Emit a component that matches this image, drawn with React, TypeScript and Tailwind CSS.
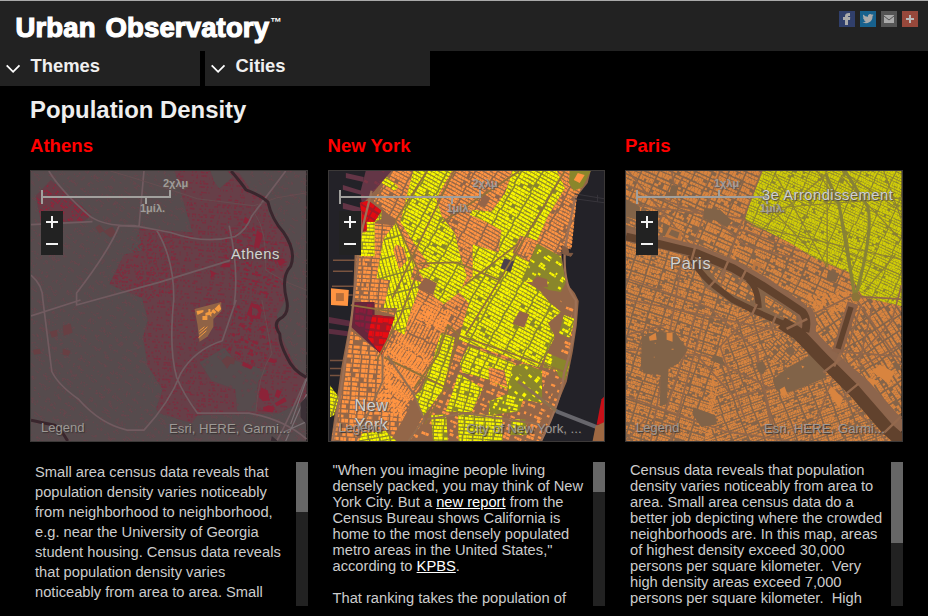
import React from "react";

type Grid = { x: number; y: number; w: number; h: number; angle: number; bw: number; bh: number; road: number; keep: number; cell: number; seed: number };

function random(seed: number) {
  let s = seed >>> 0;
  return () => {
    s = (s * 1664525 + 1013904223) >>> 0;
    return s / 4294967296;
  };
}

// Building footprints laid out in city blocks, as one path.
function buildings(g: Grid) {
  const rnd = random(g.seed);
  const rad = (g.angle * Math.PI) / 180;
  const c = Math.cos(rad);
  const s = Math.sin(rad);
  const cx = g.x + g.w / 2;
  const cy = g.y + g.h / 2;
  const r = Math.hypot(g.w, g.h) / 2;
  let d = "";
  for (let v = -r; v < r; v += g.bh + g.road) {
    const shift = rnd() * 2;
    for (let u = -r; u < r; u += g.bw + g.road) {
      const rows = Math.max(1, Math.round(g.bh / g.cell));
      const ch = g.bh / rows;
      for (let row = 0; row < rows; row++) {
        let p = 0;
        while (p < g.bw) {
          const len = Math.min(g.bw - p, g.cell * (0.7 + rnd()));
          const keep = rnd() < g.keep;
          const hh = ch * (0.7 + rnd() * 0.28);
          if (keep) {
            const a = u + p + shift;
            const b = v + row * ch + (row % 2 ? ch - hh : 0);
            const l = len - 0.35;
            const X = cx + a * c - b * s;
            const Y = cy + a * s + b * c;
            if (X > g.x - 6 && X < g.x + g.w + 6 && Y > g.y - 6 && Y < g.y + g.h + 6) {
              d += `M${X.toFixed(1)} ${Y.toFixed(1)}l${(l * c).toFixed(1)} ${(l * s).toFixed(1)}l${(-hh * s).toFixed(1)} ${(hh * c).toFixed(1)}l${(-l * c).toFixed(1)} ${(-l * s).toFixed(1)}z`;
            }
          }
          p += len;
        }
      }
    }
  }
  return d;
}

function bounds(points: string) {
  const n = points.trim().split(/[\s,]+/).map(Number);
  const xs = n.filter((_, i) => i % 2 === 0);
  const ys = n.filter((_, i) => i % 2 === 1);
  const x = Math.min(...xs);
  const y = Math.min(...ys);
  return { x, y, w: Math.max(...xs) - x, h: Math.max(...ys) - y };
}

type ZoneProps = { id: string; pts: string; ground?: string; fill: string; angle: number; bw?: number; bh?: number; road?: number; keep?: number; cell?: number; seed?: number };

function Zone({ id, pts, ground, fill, angle, bw = 17, bh = 5.8, road = 1.3, keep = 0.95, cell = 2.9, seed = 7 }: ZoneProps) {
  return (
    <g>
      <clipPath id={id}><polygon points={pts} /></clipPath>
      {ground && <polygon points={pts} fill={ground} />}
      <path clipPath={`url(#${id})`} fill={fill} d={buildings({ ...bounds(pts), angle, bw, bh, road, keep, cell, seed })} />
    </g>
  );
}

function Lines({ d, color, width }: { d: string; color: string; width: number }) {
  return <path d={d} fill="none" stroke={color} strokeWidth={width} strokeLinejoin="round" />;
}

function AthensMap() {
  const east = "175,170 228,170 240,172 252,190 268,196 270,214 293,243 294,254 287,270 287,300 278,315 282,335 297,368 308,378 308,400 280,414 198,416 192,424 160,414 156,410 163,390 148,367 143,338 148,320 142,298 109,284 124,254 142,250 139,228 155,229 193,232";
  return (
    <svg className="block h-full w-full" viewBox="30 170 278 272" preserveAspectRatio="none">
      <rect x="30" y="170" width="278" height="272" fill="#564b4d" />
      <Zone id="aBase" pts="30,170 308,170 308,442 30,442" fill="#69454c" angle={38} bw={13} bh={5} road={4} keep={0.35} cell={1.4} seed={3} />
      <polygon points={east} fill="#673f48" />
      <Zone id="aEast" pts={east} fill="#7e2c3e" angle={4} bw={10} bh={3.6} road={2} keep={0.4} cell={1.5} seed={11} />
      <Zone id="aWest" pts="50,179 91,214 83,221 40,221 35,195" ground="#673c46" fill="#94233a" angle={40} bw={9} bh={4} road={2.2} keep={0.55} cell={1.7} seed={21} />
      <Zone id="aMid" pts="112,284 141,228 175,232 175,292 148,300" fill="#8a263b" angle={-40} bw={9} bh={3} road={2} keep={0.35} cell={1.4} seed={22} />
      <Zone id="aCentre" pts="226,225 262,226 280,245 281,285 266,300 236,285 226,260" fill="#8d2239" angle={14} bw={9} bh={6} road={3} keep={0.35} cell={2.4} seed={28} />
      <Zone id="aCampus" pts="237,300 264,300 274,345 268,371 245,366 227,352" fill="#8a2439" angle={28} bw={9} bh={6} road={3} keep={0.35} cell={2.7} seed={58} />
      <polygon points="200,363 225,348 236,361 268,371 259,382 257,412 238,412 236,390 212,381" fill="#564b4d" />
      <polygon points="211,170 228,170 234,176 220,188 215,181" fill="#564c4d" />
      <Zone id="aSouth" pts="200,363 225,348 236,361 268,371 259,382 257,412 238,412 236,390 212,381" fill="#65434a" angle={35} keep={0.2} cell={2.4} seed={8} />
      <g fill="#683f43">
        <path d="M103 231l9-5 5 8-7 3z" /><path d="m95 227 4-3 5 6-5 3zM62 326l8-2 2 9-9 3zm-13 6 7-2 1 6-6 2zm13 17 8 2-2 5-6-1zM32 350l7-1 1 5-7 1zM222 361l5-4 5 6-4 6zm5-5 9 3-1 6-8-2z" />
      </g>
      <g fill="#8c2338">
        <path fillRule="evenodd" d="m252 303 8 2 3 5-2 8-8 1-5-5zM253 307l5 2 2 4-3 3-4-1z" />
        <path d="m262 388 7 3 2 10-7 1-4-4zm16 2 5 2-3 7-4-2zm-14 18 6-2 6 2-2 5-9-1zM276 404l10-6 2 4-10 5zM270 358l8 3-2 3-7-2zM244 362l10 5-2 3-9-4zM258 230l6 3-4 15-5-2zm20 30 6-2 3 4-6 4zM211 270l6 3-5 5zM246 216l6 4-3 4-5-2zM223 263h8v4h-9z" />
      </g>
      <Lines d="M48 170Q60 190 90 216Q105 226 134 225L171 232Q205 244 236 236Q247 230 253 215L287 170M144 170L139 226L119 225Q109 250 76 293V305L160 282L231 260M30 224L92 221M30 316L80 300M30 275Q42 285 42 300L51 372Q57 385 78 400Q100 425 127 431H144Q170 403 181 374Q195 350 223 341L237 300M174 300Q169 350 177 378Q184 395 198 414H250Q285 420 308 440M174 302Q175 260 157 230M230 225Q240 270 235 305M308 378Q290 420 278 442" color="#715b60" width={1.7} />
      <Lines d="M110 170Q145 180 198 198L255 205L278 197L308 192M273 354Q259 375 257 413M263 300Q268 325 273 354M256 213Q268 230 267 270L288 282L308 290" color="#674d51" width={0.9} />
      <Lines d="M232 170Q243 183 247 189Q261 194 269 201Q273 219 285 232Q298 251 292 266Q282 277 288 300Q291 314 281 319Q274 324 281 334Q281 344 288 357Q294 371 308 378M30 421Q39 423 54 426Q61 431 67 442" color="#39262d" width={3} />
      <polygon points="195,309 222,302 222,311 214,319 214,327 208,337 200,342 198,325" fill="#906346" />
      <path d="m197 311 7-1v2l-6 3zm9 2 3-1v-3h2v3l4-1-3 3v3l-2-2-4 1zm14-9 2 5-3 3-4-3zm-6 5 3 3-2 2-3-3zm-11 7h5v4h-5z" fill="#f39b40" />
      <path d="m199 338 8-7m-7 3 8-7m-8 4 5-4" fill="none" stroke="#f39b40" strokeWidth="1" />
      <Lines d="M292 425L308 380M287 442L308 395M285 433L307 423" color="#7a7074" width={1.2} />
      <path d="M273 437l6 5h-7zM302 404l6-7v28l-6-7z" fill="#3b3036" />
    </svg>
  );
}

const NY_YELLOW: { p: string; a: number }[] = [
  { p: "383,173 398,186 394,190 378,180", a: 29 },
  { p: "413,170 452,170 436,198 442,216 455,233 460,254 467,276 460,292 444,304 436,298 418,270 430,266 412,240 400,221", a: 29 },
  { p: "396,222 405,240 415,264 410,279 421,282 408,318 404,335 391,328 397,308 383,308 390,280 376,278 383,238", a: 75 },
  { p: "357,232 365,232 365,222 381,209 381,218 374,222 374,256 357,256", a: 2 },
  { p: "513,170 558,170 566,187 549,215 538,240 521,235 513,252 530,262 524,280 540,290 550,302 562,312 549,323 556,337 540,368 496,353 459,340 469,303 459,292 473,276 473,244 499,252 502,230 484,220 470,214 473,209 492,211 506,192", a: 29 },
  { p: "469,346 513,363 526,374 508,390 489,380 463,373 460,364", a: 22 },
  { p: "441,333 455,338 448,370 443,390 430,408 423,418 414,397 421,391 433,360", a: 20 },
  { p: "459,374 483,389 472,413 446,412", a: 15 },
  { p: "431,416 446,415 448,442 433,442", a: 2 },
  { p: "458,413 503,417 503,442 459,442", a: 4 },
  { p: "362,434 385,432 396,442 358,442", a: -10 },
];

function NewYorkMap() {
  const olive = "#8a862b";
  const yellow = "#f9f700";
  const orange = "#ff9442";
  const land = "372,170 592,170 589,182 578,196 575,225 572,249 562,244 563,257 567,282 576,293 580,301 578,326 574,352 568,382 556,411 542,442 330,442 340,370 352,306 354,250 361,204";
  return (
    <svg className="block h-full w-full" viewBox="328 170 278 272" preserveAspectRatio="none">
      <rect x="328" y="170" width="278" height="272" fill="#232228" />
      <path d="M345 172l18 4v5l-18-4zm-3 12 22 7v4l-22-6zm0 18 18 5v5l-18-4z" fill="#633546" />
      <path d="M332 260h22M332 271h20M331 286h22M331 295h21M329 361h13M329 369h11M329 376h10" stroke="#79533f" strokeWidth="1.5" />
      <polygon points="330,288 348,290 347,306 330,305" fill="#ff9442" />
      <rect x="335" y="293" width="8" height="8" fill="#b66e3b" />
      <path d="M328 317l23 4v6l-23-4zm0 12 23 3v5l-23-3z" fill="#5b2d40" />
      <polygon points={land} fill="#936648" />
      <Zone id="nNorth" pts="392,170 590,170 578,197 573,247 540,260 525,285 500,300 450,335 400,316 395,220 373,200" fill={orange} angle={29} seed={19} />
      <Zone id="nWest" pts="366,222 394,225 386,305 397,316 376,310 354,298 356,258" fill={orange} angle={3} bw={8} bh={7} keep={0.95} seed={31} />
      <Zone id="nVillage" pts="395,316 420,300 452,312 438,350 412,392 400,418 375,350 390,330" fill={orange} angle={117} bw={15} bh={5} seed={17} />
      <Zone id="nSoho" pts="349,330 382,355 404,418 390,442 330,442 344,380" fill={orange} angle={4} bw={7} bh={8} cell={3.6} keep={0.9} seed={14} />
      <Zone id="nHudson" pts="382,355 400,335 433,361 418,390 403,420 374,410" fill={orange} angle={-50} bw={14} bh={5} keep={0.97} seed={41} />
      <Zone id="nEast" pts="450,337 484,345 555,365 573,325 561,300 576,310 572,350 560,395 543,442 410,442 440,382" fill={orange} angle={22} bw={8} bh={6} road={3} keep={0.58} cell={3} seed={12} />
      {NY_YELLOW.map((z, i) => (
        <Zone key={i} id={`ny${i}`} pts={z.p} ground={olive} fill={yellow} angle={z.a} bw={i > 4 ? 9 : 17} bh={6} seed={i * 17 + 5} keep={0.97} />
      ))}
      <Zone id="nOlive1" pts="538,243 562,256 567,282 562,292 550,290 535,282 522,281" ground={olive} fill={yellow} angle={34} bw={8} bh={5} road={5} keep={0.5} seed={4} />
      <Zone id="nOlive2" pts="513,367 525,364 543,371 543,404 508,397" ground={olive} fill={yellow} angle={-50} bw={7} bh={4} road={4} keep={0.65} seed={9} />
      <Zone id="nOlive3" pts="565,315 576,319 571,338 560,334" ground={olive} fill={yellow} angle={29} keep={0.5} seed={2} />
      <Zone id="nOlive4" pts="548,353 571,363 566,381 556,370 544,368" ground={olive} fill={yellow} angle={25} keep={0.45} seed={6} />
      <Zone id="nOlive5" pts="507,395 524,400 520,412 489,416 490,402" ground={olive} fill={yellow} angle={15} keep={0.55} seed={16} />
      <Zone id="nOlive6" pts="512,420 526,420 528,436 511,436" ground={olive} fill={yellow} angle={6} keep={0.6} seed={13} />
      <Zone id="nOlive7" pts="329,386 338,398 333,416 329,418" ground={olive} fill={yellow} angle={15} seed={16} />
      <polygon points="556,358 571,362 566,381 559,376" fill={olive} />
      <polygon points="571,170 592,170 584,186 575,190 570,182" fill={olive} />
      <path d="M579 172l7 2-5 8-6-3z" fill={orange} />
      <path d="m425 277 12 6-4 12-16-7zM484 193l7 4-6 10-6-3zM520 311l10 3-5 14-12-4zM538 276l10 3 1 8-12-1-4-5z" fill="#956448" />
      <Zone id="nJackson" pts="396,244 403,247 407,260 399,269 393,250" ground="#936648" fill={orange} angle={75} seed={51} />
      <Zone id="nPocket" pts="518,242 533,241 527,260 516,252" ground="#936648" fill={orange} angle={117} seed={23} />
      <Zone id="nPocket2" pts="489,368 505,371 508,388 490,381" ground="#956448" fill={orange} angle={22} seed={26} />
      <polygon points="505,258 515,261 511,272 501,268" fill="#4b414b" />
      <polygon points="365,170 391,170 372,192 361,204 360,190" fill="#633646" />
      <Zone id="nMauve" pts="365,170 391,170 372,192 361,204 360,190" fill="#7a3545" angle={30} keep={0.25} seed={44} />
      <Zone id="nRed1" pts="359,202 368,200 381,210 374,221 366,221 366,231 361,231 361,213" ground="#a51925" fill="#e20b12" angle={30} cell={5} seed={31} />
      <polygon points="353,302 374,302 374,315 394,317 381,355 349,326" fill="#66273b" />
      <Zone id="nRed2" pts="355,304 372,304 372,320 368,334 354,324" fill="#891c3c" angle={8} cell={4.5} seed={31} />
      <Zone id="nRed3" pts="372,315 394,317 381,355 367,338" ground="#a51925" fill="#e90c12" angle={5} cell={4} seed={3} />
      <Lines d="M395 220L418 270L400 316L376 361M395 220L427 170M454 170L392 298M384 358L450 390M350 305L394 312M414 389L438 355L448 325L460 336L565 372M459 335L443 392L425 425M466 335L500 280L566 170M442 222L520 170M500 280L457 262L419 263M465 285L519 243" color="#91713a" width={1.8} />
      <Lines d="M371 190L360 235L350 325L332 442M577 195Q568 235 566 250Q564 285 577 300Q578 335 565 374Q563 400 542 442" color="#9d7055" width={2.3} />
      <Lines d="M382 354V382L355 442M387 356L413 394L424 420L408 442M427 420L465 414L540 425" color="#936e50" width={2} />
      <Lines d="M519 382L558 412" color="#8b704f" width={3} />
      <Lines d="M557 412L606 431" color="#67666c" width={4} />
      <path d="M563 245l6 3 1 5 4 0-2 3-8-3zM561 252l8 3" fill="#805a43" stroke="#805a43" strokeWidth="1" />
      <path d="M576 193l30 5M576 198l30 4M599 194v7" stroke="#38363c" fill="none" />
      <path d="M603 400l3-3v27l-8 2z" fill="#c81018" />
      <path d="M597 427l9-4v19H594z" fill="#9e6842" />
    </svg>
  );
}

function ParisMap() {
  const marais = "762,170 903,170 903,306 864,297 850,272 816,258 790,242 745,219 752,196";
  const earth = "#856449";
  const orange = "#d8843f";
  return (
    <svg className="block h-full w-full" viewBox="625 170 278 272" preserveAspectRatio="none">
      <rect x="625" y="170" width="278" height="272" fill={earth} />
      <Zone id="pNorthWest" pts="625,170 762,170 745,219 733,263 688,248 625,224" fill={orange} angle={24} bw={15} bh={9} road={1.2} keep={0.9} cell={2.6} seed={7} />
      <Zone id="pNorth" pts="745,219 852,271 865,310 805,312 755,281 729,264" fill={orange} angle={25} bw={17} bh={8} road={1.2} keep={0.9} cell={2.6} seed={17} />
      <Zone id="pWest" pts="625,238 690,257 705,287 740,308 720,360 711,442 625,442" fill={orange} angle={18} bw={14} bh={10} road={1.3} keep={0.88} cell={2.2} seed={67} />
      <Zone id="pSouth" pts="740,306 790,330 840,380 896,442 704,442 714,360" fill={orange} angle={-20} bw={14} bh={8} road={1.3} keep={0.88} cell={2.2} seed={27} />
      <Zone id="pIsland" pts="702,261 735,275 752,286 758,305 725,291" fill={orange} angle={28} bw={10} bh={7} keep={0.85} cell={3} seed={61} />
      <Zone id="pEast" pts="807,295 870,290 903,307 903,430 862,391 808,328" fill={orange} angle={57} bw={13} bh={9} road={1.3} keep={0.9} cell={2.6} seed={97} />
      <Zone id="pMarais" pts={marais} ground="#8b8430" fill="#d1cd08" angle={25} bw={15} bh={9} road={0.8} keep={0.96} cell={2.5} seed={37} />
      <Lines d="M627 170L691 246M671 170L678 206L746 219M762 170L733 245L718 294M720 170L691 249L676 275M625 203L710 214L744 244L805 261M625 184L800 251M683 175L650 237M625 299L790 333M700 300L682 360L665 412M625 397L724 432L790 442M680 270L650 442M625 350L705 356L773 390M705 313L670 442M757 350L773 437M725 345L790 320M755 310L720 347L745 420M735 397L835 375L810 442M625 278L708 307L755 349L777 442M644 420L625 442M695 354L735 399M665 325L626 335M806 318L852 296L903 299M862 305L840 376M858 300L903 365M841 352L903 357M838 378L893 322L903 285M855 371L903 344M837 390L888 442M874 305L860 365" color="#92674a" width={1.7} />
      <g fill="#816348">
        <path d="m641 337 14-5 20 1 12 17-9 14-10 5-2 36-7 2 1-32-17-1-3-8zM773 380l17-13 22-12 13 8 2 15-24 10-20 7-7-5zM693 408l22 8 2 9-16 3-9-13z" />
        <path d="M704 207l16 2 12 11-5 7-13-8-11 0zM671 184l7 1-3 11-7-1zM662 223l19 7-4 12-15-7zM625 199l14 7v14l-14-4zM829 270l11 3-3 9-10-2zM758 364l5-3 4 8-4 6-5-3zM714 355l8 3 3 8-15-5z" />
      </g>
      <g fill={orange}>
        <path d="m648 337 7-4 1 7-7 1zm18-4h6v9l-6-2zM653 357h1v1h-1zm18-8h2v1h-2zm-17-6h1v1h-1zm134 35 2 1-2 1zm14-12 3 1-2 2zm-22 24 5-3 3 8-6 2z" />
      </g>
      <path fillRule="evenodd" d="m669 226 13 5-3 11-15-6zm2 3-3 5 9 4 2-6zM754 261l8 3-4 11-7-3zm2 4-1 4 2 1 2-4z" fill="#bd763f" />
      <path d="m881 365 15 8-6 11-17-12zM870 378l8 3-4 7-7-4zm-38 9 12 12-4 10-11-17z" fill={orange} />
      <Zone id="pPlants" pts="765,344 781,333 806,352 785,368 773,359" ground={earth} fill={orange} angle={42} bw={6} bh={5} road={1.2} keep={0.96} cell={2.8} seed={91} />
      <g fill={earth}><circle cx="775" cy="352" r="2.5" /><circle cx="791" cy="351" r="4" /><circle cx="784" cy="362" r="2" /></g>
      <Lines d="M818 170L840 204L848 238L856 295M843 170L903 211M842 175L903 240M777 207L903 197M757 192L810 249M764 227L828 172M828 172V267M751 225L903 259M775 172L828 267M885 170L903 219M865 292L897 254M844 250L903 275" color="#8d8132" width={1.2} />
      <Lines d="M827 174L840 204L856 297M846 170L869 206Q875 232 856 298" color="#888236" width={3.2} />
      <Lines d="M625 234L660 242L697 251L733 266L764 283L790 301L804 311" color="#8d654c" width={13} />
      <Lines d="M804 311Q811 320 807 334L822 350L844 371L864 388L903 432" color="#8d654c" width={17} />
      <Lines d="M625 236L660 244L697 253L733 268L762 285L788 302L803 312Q809 319 806 332" color="#61422d" width={8} />
      <Lines d="M690 255Q697 271 712 284L733 300L755 311L782 323L800 336" color="#61422d" width={6} />
      <Lines d="M748 279Q758 287 759 308" color="#61422d" width={6} />
      <polygon points="763,294 785,307 798,316 799,324 780,317 765,308" fill={earth} />
      <Zone id="pIsland2" pts="765,295 784,307 797,316 797,323 780,316 766,307" fill={orange} angle={30} bw={10} bh={7} keep={0.9} cell={2.6} seed={62} />
      <Lines d="M782 323L799 334L823 359L856 392L888 429L903 442" color="#61422d" width={13} />
      <Lines d="M854 303L838 353" color="#8c6249" width={11} />
      <Lines d="M852 307L839 349" color="#61422d" width={5.5} />
      <Lines d="M695 246l-4 14M728 261l-7 16M746 270l-7 14M757 304l-5 11M777 314l-5 12M808 319l-21 10M842 359l-18 14M860 384l-15 12M903 417l-19 18M842 353l-7 14M716 279l-9 10" color="#94694d" width={2.4} />
      <circle cx="857" cy="297" r="4.5" fill="#8b7338" />
    </svg>
  );
}

const SCALES: Record<string, { bar: string; km: string; mile: string }> = {
  Athens: { bar: "M1 2v14M0 9h130M129 2v7M105 9v7", km: "left-[122px]", mile: "left-[99px]" },
  "New York": { bar: "M1 2v14M0 9h142M141 2v7M113 9v7", km: "left-[134px]", mile: "left-[108px]" },
  Paris: { bar: "M1 2v14M0 9h132M131 9v7M83 2v7", km: "left-[78px]", mile: "left-[124px]" },
};

function ScaleBar({ unit, place }: { unit: string; place: string }) {
  const scale = SCALES[place];
  return (
    <div className="absolute left-[10px] top-[5px] h-[39px] w-[165px] text-[11px] font-bold leading-[13px] text-[#9f9c99] [text-shadow:1px_1px_1px_#62544f]">
      <svg className="absolute left-0 top-3" width="146" height="24" viewBox="0 0 146 24" fill="none" stroke="#a1a09d" strokeWidth="2">
        <path d={scale.bar} />
      </svg>
      <span className={`absolute top-[1px] ${scale.km}`}>{unit}</span>
      <span className={`absolute top-[26px] ${scale.mile}`}>1μίλ.</span>
    </div>
  );
}

function MapPanel({ city, unit, credit, children, label }: { city: string; unit: string; credit: string; children: React.ReactNode; label: React.ReactNode }) {
  return (
    <div className="relative h-[272px] overflow-hidden border border-[#3c3938]">
      {children}
      <ScaleBar unit={unit} place={city} />
      <div className="absolute left-[10px] top-[40px] flex h-11 w-[22px] flex-col bg-[#222]">
        <svg viewBox="0 0 22 44" className="h-11 w-[22px]" stroke="#f2f2f2" strokeWidth="2"><path d="M5 11h12M11 5v12M5 33h12" /></svg>
      </div>
      {label}
      <span className="absolute bottom-[5px] left-[10px] text-[13px] leading-4 text-[#9d9995] [text-shadow:1px_1px_1px_#383333]">Legend</span>
      <span className="absolute bottom-[4px] left-[138px] whitespace-nowrap text-[13.2px] leading-4 text-[#9d9995] [text-shadow:1px_1px_1px_#383333]">{credit}</span>
    </div>
  );
}

const labelStyle = "absolute whitespace-nowrap text-[#d3d3d0] [text-shadow:1px_1px_1px_#4c4643,0_0_1px_#57504b]";

function Story({ lines, thumb, loose = false }: { lines: React.ReactNode[]; thumb: string; loose?: boolean }) {
  return (
    <div className="mt-5 flex h-36 justify-between overflow-hidden">
      <div className={`whitespace-pre pl-[5px] text-[14.7px] text-[#ccc] ${loose ? "leading-5" : "leading-4"}`}>
        {lines.map((line, i) => <div key={i} className={loose ? "h-5" : "h-4"}>{line}</div>)}
      </div>
      <div className="h-full w-3 shrink-0 bg-[#222]"><div className={`${thumb} w-3 bg-[#666]`} /></div>
    </div>
  );
}

function City({ name, children }: { name: string; children: React.ReactNode }) {
  return (
    <section className="w-[277.5px] shrink-0">
      <h2 className="h-[35px] text-[18.6px] font-bold leading-[22px] text-[#f00]">{name}</h2>
      {children}
    </section>
  );
}

function Tab({ label, width }: { label: string; width: string }) {
  return (
    <button className={`flex h-[35px] ${width} items-start bg-[#222] pl-[6px] pt-[3px]`}>
      <svg className="mt-[10px]" width="15" height="10" viewBox="0 0 15 10" fill="none" stroke="white" strokeWidth="1.8"><path d="m.7 1.3 6.4 6.5 6.4-6.5" /></svg>
      <span className="ml-[9.5px] text-[18.4px] font-bold leading-[24px] text-[#f0f0f0]">{label}</span>
    </button>
  );
}

function Share() {
  return (
    <div className="ml-auto mr-[10px] mt-[10px] flex gap-[5px]">
      <svg width="16" height="16"><path fill="#303f6b" d="M0 0h16v16H0z" /><path fill="#aaa" d="M6 14V9H4V6h2V5q0-3 4-3h1v3H9.5Q9 5 9 6h2.2L11 9H9v5z" /></svg>
      <svg width="16" height="16"><path fill="#17618d" d="M0 0h16v16H0z" /><path transform="translate(2.4 1.9) scale(.47)" fill="#aaa" d="M24 4.6a10 10 0 0 1-2.8.8 5 5 0 0 0 2.2-2.7 10 10 0 0 1-3.1 1.2 4.9 4.9 0 0 0-8.4 4.5A14 14 0 0 1 1.7 3.2a4.9 4.9 0 0 0 1.5 6.5A5 5 0 0 1 1 9.1c0 2.3 1.6 4.4 3.9 4.9a5 5 0 0 1-2.2.1 5 5 0 0 0 4.6 3.4A10 10 0 0 1 0 19.5 14 14 0 0 0 21.5 7z" /></svg>
      <svg width="16" height="16"><path fill="#555" d="M0 0h16v16H0z" /><path d="M3 4h10v8H3z" fill="#aaa" /><path d="m3 5 5 4 5-4" stroke="#555" fill="none" /></svg>
      <svg width="16" height="16"><path fill="#97483b" d="M0 0h16v16H0z" /><path d="M4 8h8M8 4v8" stroke="#bbb" strokeWidth="2" /></svg>
    </div>
  );
}

export default function App() {
  return (
    <main className="h-[616px] w-[928px] overflow-hidden bg-black font-['Liberation_Sans',Arial,sans-serif]">
      <header className="flex h-[51px] border-t border-[#aaa] bg-[#222] pl-[15.5px]">
        <h1 className="mt-[9px] whitespace-nowrap text-[27.5px] font-bold leading-[36px] tracking-[0.15px] text-white [-webkit-text-stroke:1.2px_white] [word-spacing:2px]">Urban Observatory</h1>
        <span className="ml-[1px] mt-[15px] text-[11.5px] font-bold leading-3 text-white">™</span>
        <Share />
      </header>
      <nav className="flex gap-[5px]"><Tab label="Themes" width="w-[200px]" /><Tab label="Cities" width="w-[225px]" /></nav>
      <h1 className="h-[49px] pl-[30px] pt-[10px] text-[23.9px] font-bold leading-[28px] text-[#eee]">Population Density</h1>
      <div className="flex gap-5 pl-[30px]">
        <City name="Athens">
          <MapPanel city="Athens" unit="2χλμ" credit="Esri, HERE, Garmi..." label={<span className={`${labelStyle} left-[200px] top-[72px] text-[14.7px] tracking-[.5px]`}>Athens</span>}><AthensMap /></MapPanel>
          <Story loose thumb="h-[50px]" lines={["Small area census data reveals that", "population density varies noticeably", "from neighborhood to neighborhood,", "e.g. near the University of Georgia", "student housing. Census data reveals", "that population density varies", "noticeably from area to area. Small"]} />
        </City>
        <City name="New York">
          <MapPanel city="New York" unit="2χλμ" credit="City of New York, ..." label={<span className={`${labelStyle} left-[26px] top-[225px] text-[16.3px] leading-[19px] tracking-[.5px]`}>New<br />York</span>}><NewYorkMap /></MapPanel>
          <Story thumb="h-[30px]" lines={['"When you imagine people living', "densely packed, you may think of New", <>York City. But a <a className="text-white underline">new report</a> from the</>, "Census Bureau shows California is", "home to the most densely populated", 'metro areas in the United States,"', <>according to <a className="text-white underline">KPBS</a>.</>, "", "That ranking takes the population of"]} />
        </City>
        <City name="Paris">
          <MapPanel city="Paris" unit="1χλμ" credit="Esri, HERE, Garmi..." label={<><span className={`${labelStyle} left-[136px] top-[13px] text-[14.7px] tracking-[.52px]`}>3e Arrondissement</span><span className={`${labelStyle} left-[44px] top-[80px] text-[16.5px] tracking-[.8px]`}>Paris</span></>}><ParisMap /></MapPanel>
          <Story thumb="h-[81px]" lines={["Census data reveals that population", "density varies noticeably from area to", "area. Small area census data do a", "better job depicting where the crowded", "neighborhoods are. In this map, areas", "of highest density exceed 30,000", "persons per square kilometer.  Very", "high density areas exceed 7,000", "persons per square kilometer.  High"]} />
        </City>
      </div>
    </main>
  );
}
